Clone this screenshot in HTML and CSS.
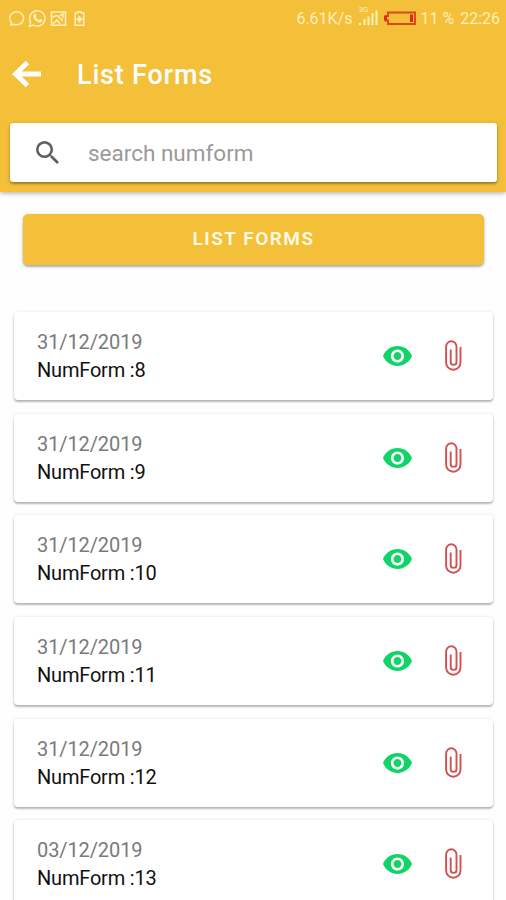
FILE: index.html
```html
<!DOCTYPE html>
<html lang="en">
<head>
    <meta charset="UTF-8">
    <meta name="viewport" content="width=device-width, initial-scale=1.0">
    <title>List Forms</title>
    <link rel="stylesheet" href="styles.css">
</head>
<body>
    <!-- Shared icons -->
    <svg class="icon-defs" width="0" height="0">
        <symbol id="icon-eye" viewBox="1 4.5 22 15">
            <path d="M12 4.5C7 4.5 2.73 7.61 1 12c1.73 4.39 6 7.5 11 7.5s9.27-3.11 11-7.5c-1.73-4.39-6-7.5-11-7.5zM12 17c-2.76 0-5-2.24-5-5s2.24-5 5-5 5 2.24 5 5-2.24 5-5 5zm0-8c-1.66 0-3 1.34-3 3s1.34 3 3 3 3-1.34 3-3-1.34-3-3-3z"/>
        </symbol>
        <symbol id="icon-clip" viewBox="0 0 18 31">
            <path d="M16.500 7v15.500a7.200 7.200 0 0 1-14.400 0V6.500a5.200 5.200 0 0 1 10.400 0V22a2.900 2.900 0 0 1-5.800 0V9.500"/>
        </symbol>
    </svg>

    <header class="header">
        <div class="status-bar">
            <div class="status-icons">
                <svg width="17" height="17" viewBox="0 0 17 17">
                    <path d="M8.700 1.800c4 0 6.900 2.900 6.900 6.500s-2.900 6.500-6.900 6.500c-1 0-2-.2-2.900-.6L2.800 15l.7-2.400C2.400 11.500 1.800 10 1.800 8.300c0-3.600 2.900-6.500 6.900-6.500z"/>
                </svg>
                <svg width="19" height="19" viewBox="0 0 19 19">
                    <path d="M1.500 17.300l1.100-4.200a7.700 7.700 0 1 1 3 3z"/>
                    <path class="solid" d="M6.300 5.200c1-.8 1.500-.4 2.300 1.700.2.500-.8 1.200-.7 1.500.7 1.300 1.700 2.200 3 2.700.5.200 1.100-1.200 1.600-1 2 .9 2.200 1.100 1.900 2-.5 1.300-2.200 1.700-4 1.100-2.400-.8-4.400-2.800-5.200-4.900-.4-1.300.2-2.400 1.100-3.100z"/>
                </svg>
                <svg width="17" height="17" viewBox="0 0 17 17">
                    <path d="M1.500 2h14v13.200h-14zM2 7c3 0 3-2 6-1l5 5M3 14l4-4 3 4M10 5.500l3-1.500v4"/>
                </svg>
                <svg class="icon-saver" width="11" height="17" viewBox="0 0 11 17">
                    <path d="M1.200 3h2.600V1.700h3.400V3h2.600v12.200H1.200z"/>
                    <path class="solid" d="M4.500 6h2v2h2v2.500h-2v2h-2v-2h-2V8h2z"/>
                </svg>
            </div>
            <div class="status-info">
                <span class="speed">6.61K/s</span>
                <div class="signal">
                    <span class="signal-type">3G</span>
                    <svg width="20" height="19" viewBox="0 0 20 19">
                        <path d="M2 16v2M6.500 12v6M10.500 9.500V18M14.500 6v12M18.500 3.500V18"/>
                    </svg>
                </div>
                <svg class="battery" width="34" height="15" viewBox="0 0 34 15">
                    <path d="M5 1.500h27v11.500H5V9.500H2.500v-4.500H5z"/>
                    <path class="solid" d="M1 5h3v4.500H1zM27 3.500h3v7.500h-3z"/>
                </svg>
                <span class="percent">11 %</span>
                <span class="clock">22:26</span>
            </div>
        </div>

        <div class="toolbar">
            <svg class="back" width="30" height="28" viewBox="0 0 30 28">
                <path d="M15.500 2.500L3.500 14l12 11.500M4 14h25"/>
            </svg>
            <h1 class="title">List Forms</h1>
        </div>

        <label class="search">
            <svg class="search-icon" width="23" height="23" viewBox="3 3 17.500 17.500">
                <path d="M15.500 14h-.79l-.28-.27A6.471 6.471 0 0 0 16 9.500 6.500 6.500 0 1 0 9.500 16c1.610 0 3.090-.59 4.230-1.570l.27.28v.79l5 4.990L20.490 19l-4.990-5zm-6 0C7.010 14 5 11.990 5 9.500S7.010 5 9.500 5 14 7.010 14 9.500 11.990 14 9.500 14z"/>
            </svg>
            <input class="search-input" type="text" placeholder="search numform">
        </label>
    </header>

    <main class="content">
        <button class="button-list">LIST FORMS</button>

        <div class="form-list">
            <div class="card">
                <div class="card-text">
                    <p class="date">31/12/2019</p>
                    <p class="num">NumForm :8</p>
                </div>
                <svg class="eye"><use href="#icon-eye"/></svg>
                <svg class="clip"><use href="#icon-clip"/></svg>
            </div>
            <div class="card">
                <div class="card-text">
                    <p class="date">31/12/2019</p>
                    <p class="num">NumForm :9</p>
                </div>
                <svg class="eye"><use href="#icon-eye"/></svg>
                <svg class="clip"><use href="#icon-clip"/></svg>
            </div>
            <div class="card">
                <div class="card-text">
                    <p class="date">31/12/2019</p>
                    <p class="num">NumForm :10</p>
                </div>
                <svg class="eye"><use href="#icon-eye"/></svg>
                <svg class="clip"><use href="#icon-clip"/></svg>
            </div>
            <div class="card">
                <div class="card-text">
                    <p class="date">31/12/2019</p>
                    <p class="num">NumForm :11</p>
                </div>
                <svg class="eye"><use href="#icon-eye"/></svg>
                <svg class="clip"><use href="#icon-clip"/></svg>
            </div>
            <div class="card">
                <div class="card-text">
                    <p class="date">31/12/2019</p>
                    <p class="num">NumForm :12</p>
                </div>
                <svg class="eye"><use href="#icon-eye"/></svg>
                <svg class="clip"><use href="#icon-clip"/></svg>
            </div>
            <div class="card">
                <div class="card-text">
                    <p class="date">03/12/2019</p>
                    <p class="num">NumForm :13</p>
                </div>
                <svg class="eye"><use href="#icon-eye"/></svg>
                <svg class="clip"><use href="#icon-clip"/></svg>
            </div>
        </div>
    </main>
</body>
</html>
```
FILE: styles.css
```css
* {
    box-sizing: border-box;
}
body {
    font-family: Roboto, sans-serif;
    background-color: #fefefe;
    color: #111;
    margin: 0;
    height: 900px;
    overflow: hidden;
}
svg {
    display: block;
    flex: none;
}
.icon-defs {
    position: absolute;
}
.header {
    height: 192px;
    background: #f4c03a;
    box-shadow: 0 1px 5px rgba(0, 0, 0, 0.35);
}

/* Status bar */
.status-bar {
    display: flex;
    justify-content: space-between;
    align-items: center;
    height: 36px;
    padding: 0 6px 0 8px;
    color: #fdeebb;
    font-size: 16px;
}
.status-icons,
.status-info {
    display: flex;
    align-items: center;
}
.status-icons {
    gap: 3px;
}
.status-icons svg,
.signal svg {
    fill: none;
    stroke: #fdeebb;
    stroke-width: 1.5;
}
.status-icons .solid {
    fill: #fdeebb;
    stroke: none;
}
.icon-saver {
    margin-left: 4px;
}
.speed {
    margin-right: 6px;
}
.signal {
    position: relative;
    margin: 0 5px 4px 0;
}
.signal svg {
    stroke-width: 2;
}
.signal-type {
    position: absolute;
    left: 0;
    top: -1px;
    font-size: 8px;
    line-height: 8px;
}
.battery {
    fill: none;
    stroke: #e0451c;
    stroke-width: 2;
    margin-right: 3px;
}
.battery .solid {
    fill: #d92c12;
    stroke: none;
}
.percent {
    margin-right: 6px;
}

/* Toolbar */
.toolbar {
    display: flex;
    align-items: center;
    height: 76px;
    padding-left: 12px;
    gap: 35px;
}
.back {
    fill: none;
    stroke: #fff;
    stroke-width: 5;
}
.title {
    margin: 1px 0 0;
    color: #fff;
    font-size: 27px;
    font-weight: 500;
    letter-spacing: 0.8px;
}

/* Search */
.search {
    display: flex;
    align-items: center;
    height: 59px;
    margin: 11px 9px 0 10px;
    padding: 0 26px;
    gap: 29px;
    background: #fff;
    border-radius: 3px;
    box-shadow: 0 2px 2px rgba(0, 0, 0, 0.25), 0 1px 4px rgba(0, 0, 0, 0.2);
}
.search-icon {
    fill: #5f5f5f;
}
.search-input {
    flex: 1;
    min-width: 0;
    padding: 0;
    border: none;
    outline: none;
    background: none;
    font-family: inherit;
    font-size: 22.5px;
}
.search-input::placeholder {
    color: #9a9a9a;
}

/* Content */
.content {
    padding: 22px 13px 0 14px;
}
.button-list {
    display: block;
    width: 461px;
    height: 51px;
    margin: 0 0 0 9px;
    padding: 0 0 2px;
    border: none;
    border-radius: 5px;
    background: #f4c03a;
    color: #fffbe6;
    font-family: inherit;
    font-size: 19px;
    font-weight: 600;
    letter-spacing: 1.5px;
    box-shadow: 0 2px 2px rgba(0, 0, 0, 0.22), 0 1px 4px rgba(0, 0, 0, 0.18);
}
.form-list {
    display: flex;
    flex-direction: column;
    gap: 13.7px;
    margin-top: 47px;
}
.card {
    display: flex;
    align-items: center;
    height: 88px;
    padding: 0 31px 0 23px;
    background: #fff;
    border-radius: 4px;
    box-shadow: 0 2px 2px rgba(0, 0, 0, 0.26), 0 0 3px rgba(0, 0, 0, 0.12);
}
.card-text {
    flex: 1;
    font-size: 20px;
    line-height: 28px;
}
.card-text p {
    margin: 0;
}
.date {
    color: #7a7a7a;
    letter-spacing: -0.1px;
}
.num {
    letter-spacing: -0.2px;
}
.eye {
    width: 29px;
    height: 20px;
    margin-right: 32px;
    fill: #10d467;
}
.clip {
    width: 18px;
    height: 31px;
    margin-bottom: 1px;
    fill: none;
    stroke: #d2504f;
    stroke-width: 1.9;
}
```
